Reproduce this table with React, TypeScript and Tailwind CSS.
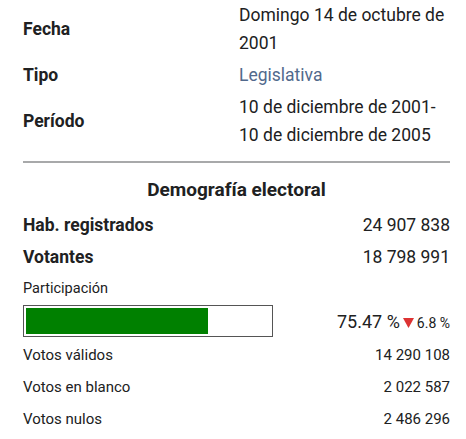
import React from 'react';

const font = { fontFamily: 'Roboto, "Noto Sans", sans-serif' };

type IInfoRowProps = {
  label: string;
  lines: string[];
  link?: boolean;
};
function InfoRow({ label, lines, link }: IInfoRowProps) {
  return (
    <div className="flex flex-row items-center">
      <div className="w-[216px] shrink-0 text-[17.5px] font-bold text-[#202122]">{label}</div>
      <div className={`text-[17.5px] leading-[28px] ${link ? 'text-[#51698c]' : 'text-[#202122]'}`}>
        {lines.map((l) => (
          <div key={l}>{l}</div>
        ))}
      </div>
    </div>
  );
}

type IStatRowProps = {
  label: string;
  value: string;
  strong?: boolean;
};
function StatRow({ label, value, strong }: IStatRowProps) {
  return (
    <div
      className={`flex flex-row justify-between items-center ${
        strong ? 'h-[32px] text-[17.5px]' : 'h-[32px] text-[15px]'
      } text-[#202122]`}
    >
      <span className={strong ? 'font-bold' : ''}>{label}</span>
      <span>{value}</span>
    </div>
  );
}

export default function App() {
  const turnout = 74.6;
  return (
    <div className="w-[466px] h-[439px] bg-white overflow-hidden pl-[23px] pr-[16px]" style={font}>
      <div className="flex flex-col gap-[4px] pt-[1px]">
        <InfoRow label="Fecha" lines={['Domingo 14 de octubre de', '2001']} />
        <InfoRow label="Tipo" lines={['Legislativa']} link />
        <InfoRow label="Período" lines={['10 de diciembre de 2001-', '10 de diciembre de 2005']} />
      </div>
      <div className="mt-[12px] h-[2px] bg-[#a8a9aa]" />
      <div className="h-[28px] mt-[13px] text-center text-[19px] font-bold text-[#202122] leading-[28px]">
        Demografía electoral
      </div>
      <div className="mt-[5px]">
        <StatRow label="Hab. registrados" value="24 907 838" strong />
        <StatRow label="Votantes" value="18 798 991" strong />
      </div>
      <div className="h-[32px] flex items-center text-[14.5px] text-[#202122]">Participación</div>
      <div className="flex flex-row items-center justify-between">
        <div className="w-[250px] h-[32px] border border-[#555] p-[2px] bg-white">
          <div className="h-full bg-[#008000]" style={{ width: `${turnout}%` }} />
        </div>
        <div className="flex flex-row items-baseline text-[#202122]">
          <span className="text-[18px]">75.47 %</span>
          <svg width="11" height="10" viewBox="0 0 11 10" className="mx-[3px] self-center mt-[3px]">
            <path d="M0 0 L11 0 L5.5 10 Z" fill="#d33" />
          </svg>
          <span className="text-[14px]">6.8 %</span>
        </div>
      </div>
      <div className="mt-[2px] text-[#333]">
        <StatRow label="Votos válidos" value="14 290 108" />
        <StatRow label="Votos en blanco" value="2 022 587" />
        <StatRow label="Votos nulos" value="2 486 296" />
      </div>
    </div>
  );
}
